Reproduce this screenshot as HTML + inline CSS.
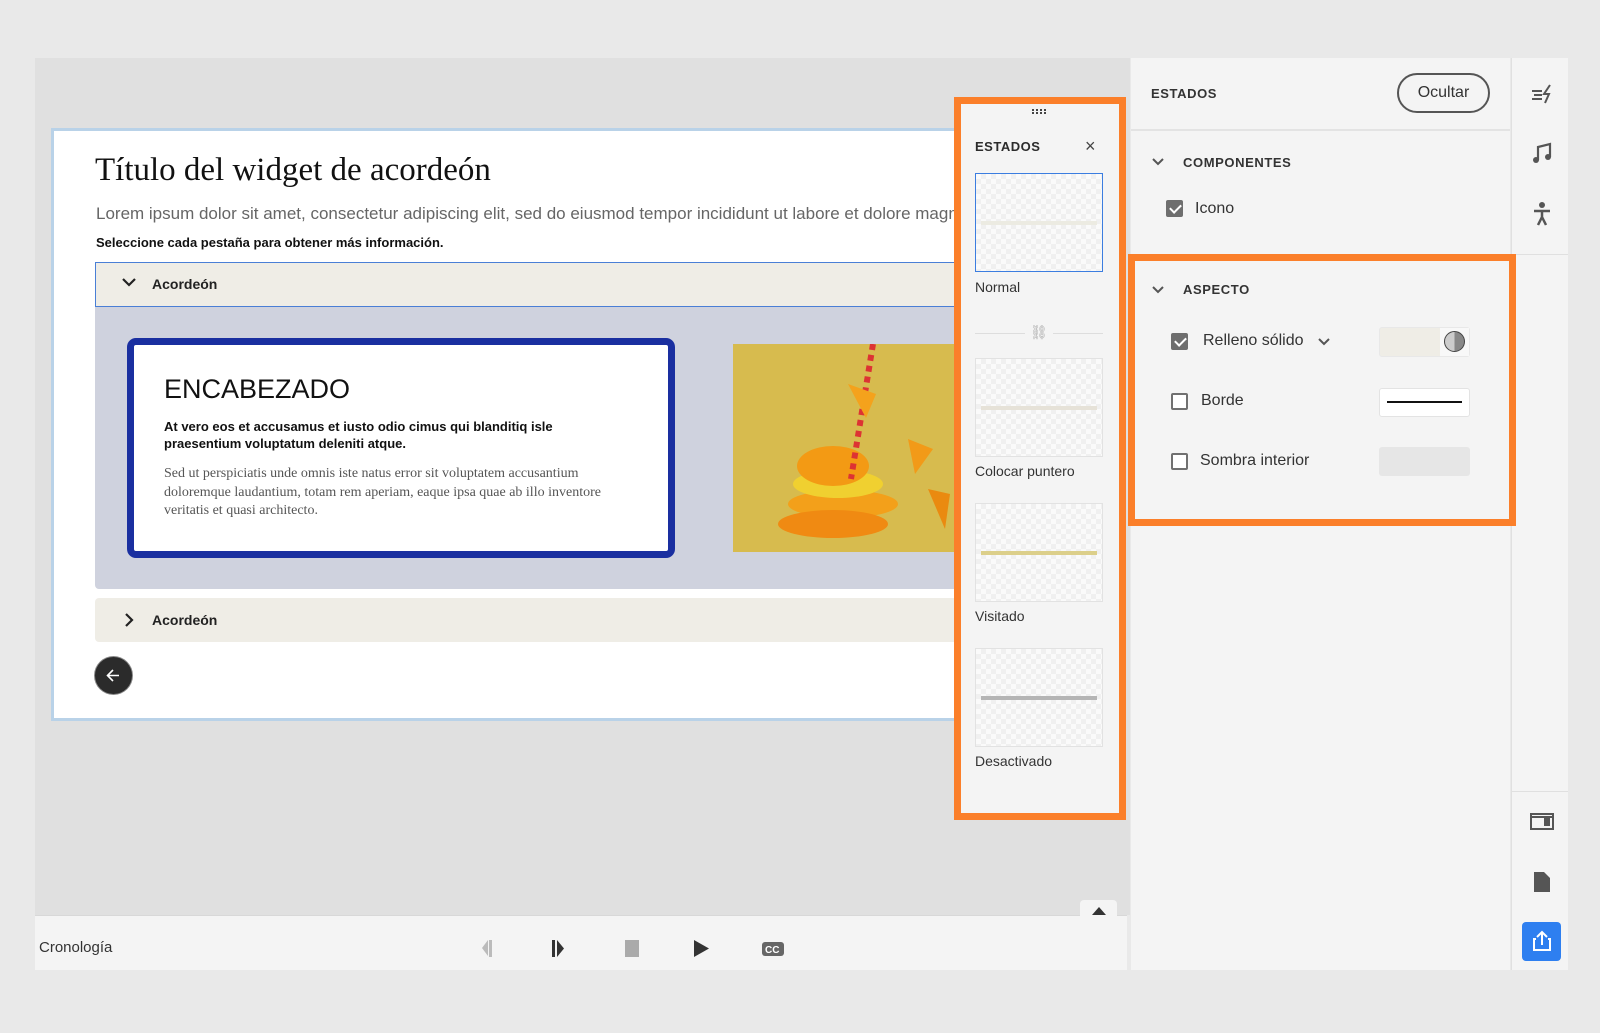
<!DOCTYPE html>
<html><head><meta charset="utf-8"><style>
*{box-sizing:border-box;margin:0;padding:0}
body{width:1600px;height:1033px;background:#e9e9e9;position:relative;overflow:hidden;font-family:"Liberation Sans",sans-serif;color:#2c2c2c}
.a{position:absolute}
.cb{position:absolute;width:17px;height:17px;border:2px solid #707070;border-radius:2px;background:#fff}
.cb.on{background:#6e6e6e;border-color:#6e6e6e}
.cb.on:after{content:"";position:absolute;left:4px;top:0px;width:5px;height:9px;border:solid #fff;border-width:0 2px 2px 0;transform:rotate(45deg)}
.thumb{position:absolute;left:975px;width:128px;height:99px;border:1px solid #e2e2e2;background-color:#fafafa;background-image:linear-gradient(45deg,#f0f0f0 25%,transparent 25%,transparent 75%,#f0f0f0 75%),linear-gradient(45deg,#f0f0f0 25%,transparent 25%,transparent 75%,#f0f0f0 75%);background-size:10px 10px;background-position:0 0,5px 5px}
.thumb i{position:absolute;left:5px;right:5px;top:47px;height:4px}
.tl{position:absolute;left:975px;font-size:14px;color:#333}
</style></head><body>
<div class="a" style="left:35px;top:58px;width:1095px;height:857px;background:#e0e0e0"></div>
<div class="a" style="left:51px;top:128px;width:920px;height:593px;background:#fff;border:3px solid #b9d2e8"></div>
<div class="a" style="left:95px;top:152px;font-family:'Liberation Serif',serif;font-size:33px;color:#111">Título del widget de acordeón</div>
<div class="a" style="left:96px;top:204px;font-size:17px;color:#666;white-space:nowrap;width:860px;overflow:hidden">Lorem ipsum dolor sit amet, consectetur adipiscing elit, sed do eiusmod tempor incididunt ut labore et dolore magna</div>
<div class="a" style="left:96px;top:235px;font-size:13px;font-weight:bold;color:#111">Seleccione cada pestaña para obtener más información.</div>
<div class="a" style="left:95px;top:262px;width:870px;height:45px;background:#efede6;border:1px solid #4a7fd6"></div>
<svg class="a" style="left:121px;top:276px" width="16" height="12"><path d="M2 3l6 6 6-6" fill="none" stroke="#222" stroke-width="2.2"/></svg>
<div class="a" style="left:152px;top:276px;font-size:14px;font-weight:bold;color:#222">Acordeón</div>
<div class="a" style="left:95px;top:307px;width:870px;height:282px;background:#cfd2de;border-radius:0 0 4px 4px"></div>
<div class="a" style="left:127px;top:338px;width:548px;height:220px;background:#fff;border:7px solid #1a2fa0;border-radius:9px"></div>
<div class="a" style="left:164px;top:374px;font-size:27px;color:#111">ENCABEZADO</div>
<div class="a" style="left:164px;top:418px;font-size:13px;font-weight:bold;color:#111;line-height:17px;width:440px">At vero eos et accusamus et iusto odio cimus qui blanditiq isle praesentium voluptatum deleniti atque.</div>
<div class="a" style="left:164px;top:465px;font-family:'Liberation Serif',serif;font-size:14px;color:#555;line-height:18.5px;width:455px">Sed ut perspiciatis unde omnis iste natus error sit voluptatem accusantium doloremque laudantium, totam rem aperiam, eaque ipsa quae ab illo inventore veritatis et quasi architecto.</div>
<div class="a" style="left:733px;top:344px;width:232px;height:208px;background:#d7bb4e;overflow:hidden">
<svg width="232" height="208"><ellipse cx="110" cy="160" rx="55" ry="14" fill="#f3a01a"/><ellipse cx="100" cy="180" rx="55" ry="14" fill="#f08a12"/><ellipse cx="105" cy="140" rx="45" ry="14" fill="#f0d030"/><ellipse cx="100" cy="122" rx="36" ry="20" fill="#f39a14"/><line x1="140" y1="0" x2="118" y2="135" stroke="#d33" stroke-width="6" stroke-dasharray="6 5"/><path d="M115 40l28 10-10 24z" fill="#f4a21c"/><path d="M175 95l25 10-18 25z" fill="#f29a18"/><path d="M195 145l22 5-5 35z" fill="#ea8a10"/></svg></div>
<div class="a" style="left:95px;top:598px;width:870px;height:44px;background:#efede6;border-radius:4px"></div>
<svg class="a" style="left:123px;top:612px" width="12" height="16"><path d="M3 2l6 6-6 6" fill="none" stroke="#222" stroke-width="2.2"/></svg>
<div class="a" style="left:152px;top:612px;font-size:14px;font-weight:bold;color:#222">Acordeón</div>
<div class="a" style="left:95px;top:657px;width:37px;height:37px;border-radius:50%;background:#2b2b2b;box-shadow:0 0 0 1px #888"></div>
<svg class="a" style="left:104px;top:666px" width="19" height="19"><path d="M15 9.5H4M9 4l-5.5 5.5L9 15" fill="none" stroke="#fff" stroke-width="1.6"/></svg>
<div class="a" style="left:954px;top:97px;width:172px;height:723px;background:#f4f4f4;border:7px solid #fb7f2a"></div>
<svg class="a" style="left:1031px;top:109px" width="16" height="6"><g fill="#444"><rect x="1" y="0" width="2" height="2"/><rect x="5" y="0" width="2" height="2"/><rect x="9" y="0" width="2" height="2"/><rect x="13" y="0" width="2" height="2"/><rect x="1" y="3" width="2" height="2"/><rect x="5" y="3" width="2" height="2"/><rect x="9" y="3" width="2" height="2"/><rect x="13" y="3" width="2" height="2"/></g></svg>
<div class="a" style="left:975px;top:139px;font-size:13px;font-weight:bold;letter-spacing:.5px;color:#2c2c2c">ESTADOS</div>
<div class="a" style="left:1085px;top:136px;font-size:18px;color:#444">×</div>
<div class="thumb" style="top:173px;border:1px solid #3b7de0"><i style="background:#ecebe2"></i></div>
<div class="tl" style="top:279px">Normal</div>
<div class="a" style="left:975px;top:333px;width:50px;height:1px;background:#ddd"></div>
<div class="a" style="left:1053px;top:333px;width:50px;height:1px;background:#ddd"></div>
<div class="a" style="left:1030px;top:324px;font-size:14px;color:#aaa">⛓</div>
<div class="thumb" style="top:358px"><i style="background:#e6e2d8"></i></div>
<div class="tl" style="top:463px">Colocar puntero</div>
<div class="thumb" style="top:503px"><i style="background:#dccf8a"></i></div>
<div class="tl" style="top:608px">Visitado</div>
<div class="thumb" style="top:648px"><i style="background:#b5b5b5"></i></div>
<div class="tl" style="top:753px">Desactivado</div>
<div class="a" style="left:35px;top:915px;width:1092px;height:55px;background:#f4f4f4;border-top:1px solid #d8d8d8"></div>
<div class="a" style="left:1080px;top:900px;width:37px;height:18px;background:#f4f4f4;border-radius:4px 4px 0 0"></div>
<svg class="a" style="left:1091px;top:906px" width="16" height="10"><path d="M1 9L8 1l7 8z" fill="#333"/></svg>
<div class="a" style="left:39px;top:939px;font-size:15px;color:#333">Cronología</div>
<svg class="a" style="left:480px;top:938px" width="310" height="22">
<path d="M2 10L8 2v16z" fill="#bbb"/><rect x="9" y="2" width="3" height="17" fill="#bbb"/>
<rect x="72" y="2" width="3" height="17" fill="#333"/><path d="M77 2l7 8.5L77 19z" fill="#333"/>
<rect x="145" y="2" width="14" height="17" fill="#aaa"/>
<path d="M214 2l15 8.5L214 19z" fill="#333"/>
<rect x="282" y="4" width="22" height="14" rx="3" fill="#666"/><text x="285" y="15" font-size="10" font-weight="bold" fill="#fff" font-family="Liberation Sans">CC</text>
</svg>
<div class="a" style="left:1131px;top:58px;width:379px;height:912px;background:#f4f4f4"></div>
<div class="a" style="left:1151px;top:86px;font-size:13px;font-weight:bold;letter-spacing:.6px;color:#333">ESTADOS</div>
<div class="a" style="left:1397px;top:73px;width:93px;height:40px;border:2px solid #555;border-radius:20px;font-size:16px;color:#333;text-align:center;line-height:36px">Ocultar</div>
<div class="a" style="left:1131px;top:129px;width:379px;height:2px;background:#e3e3e3"></div>
<svg class="a" style="left:1151px;top:157px" width="14" height="10"><path d="M2 2l5 5 5-5" fill="none" stroke="#555" stroke-width="2"/></svg>
<div class="a" style="left:1183px;top:155px;font-size:13px;font-weight:bold;letter-spacing:.6px;color:#333">COMPONENTES</div>
<div class="cb on" style="left:1166px;top:200px"></div>
<div class="a" style="left:1195px;top:200px;font-size:16px;color:#333">Icono</div>
<div class="a" style="left:1511px;top:58px;width:57px;height:912px;background:#f4f4f4;border-left:1px solid #e0e0e0"></div>
<div class="a" style="left:1516px;top:254px;width:52px;height:1px;background:#e0e0e0"></div>
<div class="a" style="left:1511px;top:791px;width:57px;height:1px;background:#e0e0e0"></div>
<div class="a" style="left:1128px;top:254px;width:388px;height:272px;border:7px solid #fb7f2a;z-index:5"></div>
<svg class="a" style="left:1151px;top:285px" width="14" height="10"><path d="M2 2l5 5 5-5" fill="none" stroke="#555" stroke-width="2"/></svg>
<div class="a" style="left:1183px;top:282px;font-size:13px;font-weight:bold;letter-spacing:.6px;color:#333">ASPECTO</div>
<div class="cb on" style="left:1171px;top:333px"></div>
<div class="a" style="left:1203px;top:332px;font-size:16px;color:#333">Relleno sólido</div>
<svg class="a" style="left:1317px;top:337px" width="14" height="10"><path d="M2 2l5 5 5-5" fill="none" stroke="#555" stroke-width="2"/></svg>
<div class="a" style="left:1379px;top:327px;width:91px;height:30px;background:#efede6;border:1px solid #e8e8e8;border-radius:3px"></div>
<div class="a" style="left:1440px;top:328px;width:29px;height:28px;background:#f8f8f8"></div>
<div class="a" style="left:1444px;top:331px;width:21px;height:21px;border-radius:50%;background:conic-gradient(#888 0 50%,#ccc 50% 100%);border:1px solid #444"></div>
<div class="cb" style="left:1171px;top:393px"></div>
<div class="a" style="left:1201px;top:392px;font-size:16px;color:#333">Borde</div>
<div class="a" style="left:1379px;top:388px;width:91px;height:29px;background:#fff;border:1px solid #e3e3e3;border-radius:3px"></div>
<div class="a" style="left:1387px;top:401px;width:75px;height:2px;background:#111"></div>
<div class="cb" style="left:1171px;top:453px"></div>
<div class="a" style="left:1200px;top:452px;font-size:16px;color:#333">Sombra interior</div>
<div class="a" style="left:1379px;top:447px;width:91px;height:29px;background:#e6e6e6;border-radius:3px"></div>
<svg class="a" style="left:1530px;top:83px" width="24" height="22"><path d="M2 8h10M4 12h8M2 16h10" stroke="#555" stroke-width="2"/><path d="M20 2l-6 9h5l-4 9" fill="none" stroke="#555" stroke-width="2"/></svg>
<svg class="a" style="left:1531px;top:142px" width="22" height="24"><path d="M7 18V5l12-3v13" fill="none" stroke="#555" stroke-width="2.2"/><circle cx="5" cy="18" r="3" fill="#555"/><circle cx="17" cy="15" r="3" fill="#555"/></svg>
<svg class="a" style="left:1531px;top:201px" width="22" height="26"><circle cx="11" cy="4" r="3" fill="#555"/><path d="M3 10h16M11 10v6M11 16l-4 8M11 16l4 8" fill="none" stroke="#555" stroke-width="2.5"/></svg>
<svg class="a" style="left:1530px;top:812px" width="24" height="20"><rect x="1" y="2" width="22" height="15" fill="none" stroke="#555" stroke-width="2"/><rect x="14" y="5" width="6" height="9" fill="#555"/><path d="M1 5h22" stroke="#555" stroke-width="2"/></svg>
<svg class="a" style="left:1533px;top:871px" width="18" height="22"><path d="M1 1h10l6 6v14H1z" fill="#555"/></svg>
<div class="a" style="left:1522px;top:922px;width:39px;height:39px;background:#2e7ff0;border-radius:4px"></div>
<svg class="a" style="left:1530px;top:929px" width="24" height="24"><path d="M6 10H4v11h16V10h-2" fill="none" stroke="#fff" stroke-width="2"/><path d="M12 16V3M7 8l5-5 5 5" fill="none" stroke="#fff" stroke-width="2"/></svg>
</body></html>
